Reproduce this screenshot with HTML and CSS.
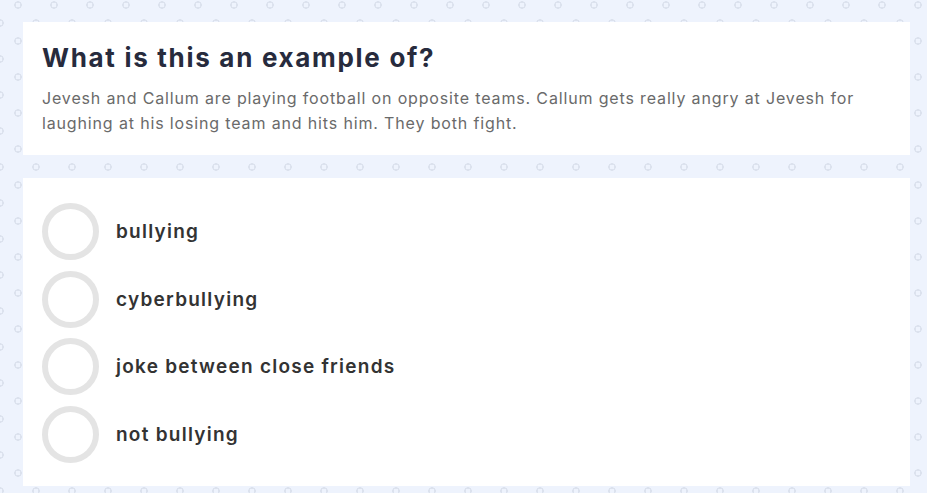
FILE: index.html
```html
<!DOCTYPE html>
<html>
<head>
<meta charset="utf-8">
<link rel="stylesheet" href="styles.css">
</head>
<body>
<div class="page">
  <section class="card question">
    <h1 class="title">What is this an example of?</h1>
    <p class="text">Jevesh and Callum are playing football on opposite teams. Callum gets really angry at Jevesh for laughing at his losing team and hits him. They both fight.</p>
  </section>
  <section class="card options">
    <div class="option"><span class="radio"></span><span class="label">bullying</span></div>
    <div class="option"><span class="radio"></span><span class="label">cyberbullying</span></div>
    <div class="option"><span class="radio"></span><span class="label">joke between close friends</span></div>
    <div class="option"><span class="radio"></span><span class="label">not bullying</span></div>
  </section>
</div>
</body>
</html>
```
FILE: styles.css
```css
html, body {
  margin: 0;
  padding: 0;
}
body {
  width: 927px;
  height: 493px;
  overflow: hidden;
  background-color: #eef3fd;
  background-image:
    radial-gradient(circle at 18px 5px, transparent 2.3px, #dce2ee 2.5px, #dce2ee 3.7px, transparent 3.9px),
    radial-gradient(circle at 0px 23px, transparent 2.3px, #dce2ee 2.5px, #dce2ee 3.7px, transparent 3.9px),
    radial-gradient(circle at 36px 23px, transparent 2.3px, #dce2ee 2.5px, #dce2ee 3.7px, transparent 3.9px);
  background-size: 36px 36px;
  font-family: Inter, "Noto Sans", sans-serif;
}
.page {
  display: flex;
  flex-direction: column;
  gap: 23px;
  padding: 22px 17px 0 23px;
}
.card {
  background: #ffffff;
}
.question {
  padding: 15px 19px 20px 19px;
  height: 98px;
}
.title {
  margin: 0;
  font-size: 26px;
  font-weight: 700;
  color: #272b3d;
  letter-spacing: 1.7px;
  line-height: 42px;
}
.text {
  margin: 7px 0 0 0;
  font-size: 16px;
  line-height: 25px;
  color: #6a6a6a;
  letter-spacing: 0.85px;
}
.options {
  height: 308px;
  padding: 25px 19px 0 19px;
  box-sizing: border-box;
  display: flex;
  flex-direction: column;
  gap: 10.5px;
}
.option {
  display: flex;
  align-items: center;
  gap: 17px;
  height: 57px;
}
.radio {
  width: 57px;
  height: 57px;
  box-sizing: border-box;
  border: 6px solid #e4e4e4;
  border-radius: 50%;
  flex: none;
}
.label {
  font-size: 19px;
  font-weight: 600;
  color: #333333;
  letter-spacing: 1.25px;
}
```
